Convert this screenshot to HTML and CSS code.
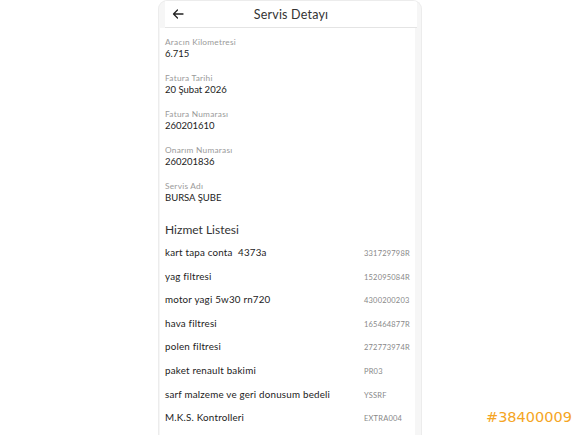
FILE: index.html
```html
<!DOCTYPE html>
<html>
<head>
    <meta charset="utf-8">
    <title>Servis Detayı</title>
    <link rel="stylesheet" href="styles.css">
</head>
<body>
<div class="phone">
    <div class="header">
        <svg class="back" width="12" height="10" viewBox="0 0 12 10">
            <path d="M11 5H1.5M5.5 1L1.5 5L5.5 9" fill="none" stroke="#222" stroke-width="1.3" stroke-linecap="round" stroke-linejoin="round"/>
        </svg>
        <div class="title">Servis Detayı</div>
    </div>
    <div class="card">
        <div class="info">
            <div class="label">Aracın Kilometresi</div>
            <div class="value">6.715</div>
        </div>
        <div class="info">
            <div class="label">Fatura Tarihi</div>
            <div class="value">20 Şubat 2026</div>
        </div>
        <div class="info">
            <div class="label">Fatura Numarası</div>
            <div class="value">260201610</div>
        </div>
        <div class="info">
            <div class="label">Onarım Numarası</div>
            <div class="value">260201836</div>
        </div>
        <div class="info">
            <div class="label">Servis Adı</div>
            <div class="value">BURSA ŞUBE</div>
        </div>

        <div class="section">Hizmet Listesi</div>
        <div class="row"><span class="name">kart tapa conta&nbsp; 4373a</span><span class="code">331729798R</span></div>
        <div class="row"><span class="name">yag filtresi</span><span class="code">152095084R</span></div>
        <div class="row"><span class="name">motor yagi 5w30 rn720</span><span class="code">4300200203</span></div>
        <div class="row"><span class="name">hava filtresi</span><span class="code">165464877R</span></div>
        <div class="row"><span class="name">polen filtresi</span><span class="code">272773974R</span></div>
        <div class="row"><span class="name">paket renault bakimi</span><span class="code">PR03</span></div>
        <div class="row"><span class="name">sarf malzeme ve geri donusum bedeli</span><span class="code">YSSRF</span></div>
        <div class="row"><span class="name">M.K.S. Kontrolleri</span><span class="code">EXTRA004</span></div>
    </div>
</div>
<div class="stamp">#38400009</div>
</body>
</html>
```

FILE: styles.css
```css
body {
    margin: 0;
    background: #fff;
    font-family: Lato, "Noto Sans", sans-serif;
    overflow: hidden;
}
.phone {
    width: 262px;
    height: 435px;
    margin: 0 auto;
    background: #f6f6f6;
    border-radius: 9px 9px 0 0;
    border: 1px solid #ececec;
    border-bottom: none;
    overflow: hidden;
}
.header {
    position: relative;
    height: 26px;
    margin: 0 4px 0 6px;
    background: #fff;
    border-bottom: 1px solid #e4e4e4;
    display: flex;
    align-items: center;
    justify-content: center;
}
.back {
    position: absolute;
    left: 7px;
    top: 8px;
}
.title {
    font-size: 12.5px;
    color: #333;
    letter-spacing: 0.2px;
}
.card {
    margin: 0 6px 0 1px;
    background: #fff;
    padding: 9px 0 0 5px;
    height: 420px;
}
.info {
    margin-bottom: 14px;
}
.label {
    font-size: 8.3px;
    line-height: 11px;
    color: #9a9a9a;
    letter-spacing: 0.25px;
}
.value {
    font-size: 9.5px;
    line-height: 11px;
    color: #222;
}
.section {
    margin-top: 19px;
    margin-bottom: 3px;
    font-size: 12px;
    line-height: 16px;
    color: #333;
}
.row {
    display: flex;
    align-items: baseline;
    height: 23.6px;
    line-height: 23.6px;
}
.name {
    width: 199px;
    font-size: 9.8px;
    color: #222;
    letter-spacing: 0.2px;
}
.code {
    font-size: 7.5px;
    color: #888;
    letter-spacing: 0.2px;
}
.stamp {
    position: absolute;
    left: 486px;
    top: 409px;
    font-family: "DejaVu Sans", sans-serif;
    font-size: 14.5px;
    color: #f5a524;
}
```
